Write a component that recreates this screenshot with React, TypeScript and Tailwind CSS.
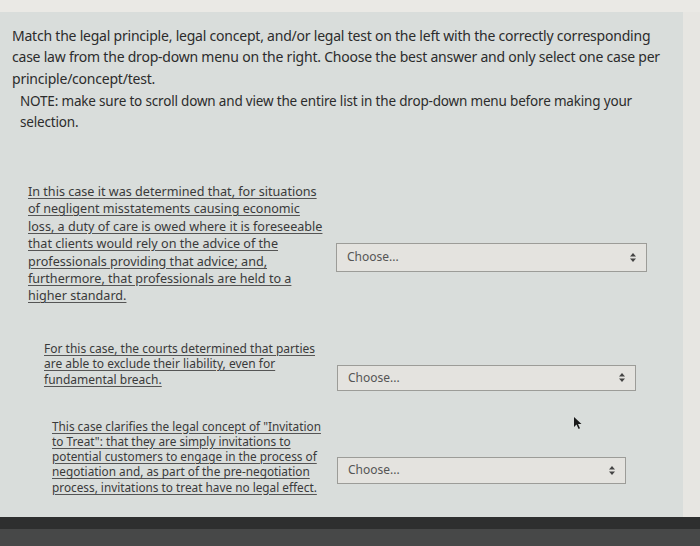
import React from "react";

type Item = {
  lines: string[];
  indent: string;
  size: string;
  leading: string;
  select: string;
};

const ITEMS: Item[] = [
  {
    lines: [
      "In this case it was determined that, for situations",
      "of negligent misstatements causing economic",
      "loss, a duty of care is owed where it is foreseeable",
      "that clients would rely on the advice of the",
      "professionals providing that advice; and,",
      "furthermore, that professionals are held to a",
      "higher standard.",
    ],
    indent: "ml-[28px] w-[308px]",
    size: "text-[12.6px]",
    leading: "leading-[17.4px]",
    select: "w-[311px] h-[29px]",
  },
  {
    lines: [
      "For this case, the courts determined that parties",
      "are able to exclude their liability, even for",
      "fundamental breach.",
    ],
    indent: "ml-[44px] w-[293px]",
    size: "text-[12px]",
    leading: "leading-[15.8px]",
    select: "w-[299px] h-[26px]",
  },
  {
    lines: [
      "This case clarifies the legal concept of \"Invitation",
      "to Treat\": that they are simply invitations to",
      "potential customers to engage in the process of",
      "negotiation and, as part of the pre-negotiation",
      "process, invitations to treat have no legal effect.",
    ],
    indent: "ml-[52px] w-[285px]",
    size: "text-[11.8px]",
    leading: "leading-[15.2px]",
    select: "w-[289px] h-[27px]",
  },
];

const SortArrows: React.FC = () => (
  <svg width="6" height="9" viewBox="0 0 6 9" className="shrink-0">
    <path d="M3 0 L6 3.5 L0 3.5 Z" fill="#444" />
    <path d="M3 9 L6 5.5 L0 5.5 Z" fill="#444" />
  </svg>
);

const Cursor: React.FC = () => (
  <svg width="10" height="14" viewBox="0 0 10 14">
    <path d="M1 1 L1 11 L3.5 8.6 L5.6 13 L7 12.3 L5 8 L8.5 8 Z" fill="#1a1a1a" />
  </svg>
);

const App: React.FC = () => {
  return (
    <div
      className="relative w-[700px] h-[546px] overflow-hidden bg-[#e9e8e4] flex flex-col"
      style={{ fontFamily: '"Noto Sans", "Open Sans", sans-serif' }}
    >
      <div className="h-[12px] bg-[#eae9e5]" />
      <div className="flex-1 flex">
        <div className="flex-1 bg-[#d9dddb] pt-[13px]">
          <div className="pl-[12px] text-[14px] leading-[21.3px] text-[#2c2c2c] tracking-[-0.22px]">
            Match the legal principle, legal concept, and/or legal test on the left with the correctly corresponding
            <br />
            case law from the drop-down menu on the right. Choose the best answer and only select one case per
            <br />
            principle/concept/test.
          </div>
          <div className="pl-[20px] mt-[2px] text-[13.5px] leading-[21px] text-[#2c2c2c] tracking-[-0.18px]">
            NOTE: make sure to scroll down and view the entire list in the drop-down menu before making your
            <br />
            selection.
          </div>

          <div className="mt-[50px] flex flex-col">
            {ITEMS.map((item, i) => (
              <div
                key={i}
                className={`flex items-center ${i === 1 ? "mt-[33px]" : ""} ${i === 2 ? "mt-[28px]" : ""}`}
              >
                <p
                  className={`${item.indent} ${item.size} ${item.leading} text-[#3a3a3a] underline decoration-[#555] underline-offset-[2px] shrink-0`}
                >
                  {item.lines.map((line, j) => (
                    <React.Fragment key={j}>
                      {line}
                      {j < item.lines.length - 1 && <br />}
                    </React.Fragment>
                  ))}
                </p>
                <div
                  className={`${item.select} mt-[27px] border border-[#9c9c98] bg-[#e4e3df] flex items-center justify-between pl-[10px] pr-[10px] shrink-0`}
                >
                  <span className="text-[12px] text-[#555]">Choose...</span>
                  <SortArrows />
                </div>
              </div>
            ))}
          </div>
        </div>
        <div className="w-[17px] bg-[#e7e6e2]" />
      </div>
      <div className="h-[29px] flex flex-col">
        <div className="h-[12px] bg-[#2e2f2f]" />
        <div className="flex-1 bg-[#474848]" />
      </div>

      <div className="absolute left-[573px] top-[416px]">
        <Cursor />
      </div>
    </div>
  );
};

export default App;
